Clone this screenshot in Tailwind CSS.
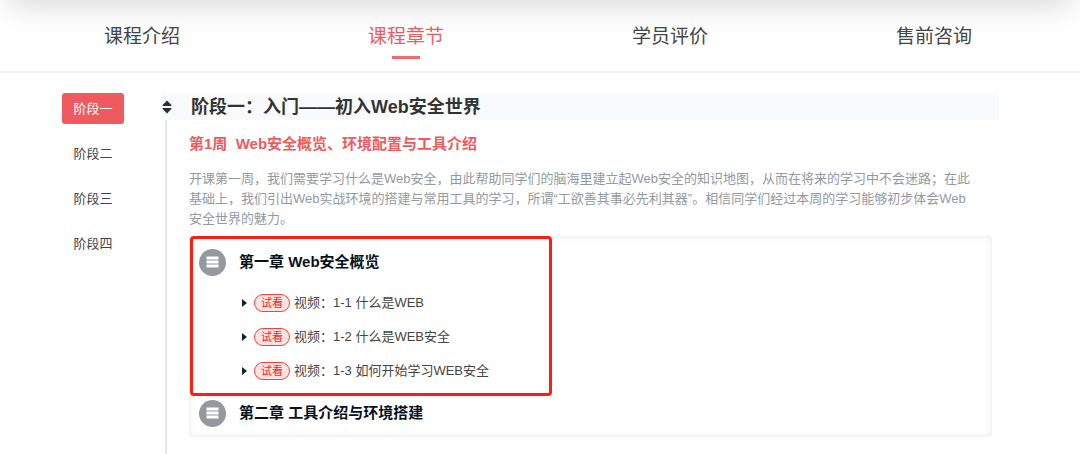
<!DOCTYPE html>
<html lang="zh-CN">
  <head>
    <title>课程章节</title>
    <meta charset="UTF-8" />
    <meta name="viewport" content="width=device-width, initial-scale=1.0" />
    <script src="https://cdn.jsdelivr.net/npm/@tailwindcss/browser@4"></script>
  </head>
  <body class="bg-white font-['Liberation_Sans','Noto_Sans_CJK_SC',sans-serif] text-[13px] text-[#444] overflow-hidden">
    <!-- bottom edge of the course card above -->
    <div class="-mt-20 h-20 mx-2 shadow-[0_6px_30px_rgba(0,0,0,0.15)]"></div>

    <nav class="grid grid-cols-4 pl-[10px] pr-[14px] h-[73px] border-b-2 border-[#f3f3f3] text-[19px]">
      <a href="#intro" class="relative flex justify-center leading-[74px]">课程介绍</a>
      <a href="#chapters" class="relative flex justify-center leading-[74px] text-[#ef5a5f]">
        课程章节
        <span class="absolute top-14 w-7 h-[3px] bg-[#f1686d]"></span>
      </a>
      <a href="#reviews" class="relative flex justify-center leading-[74px]">学员评价</a>
      <a href="#consult" class="relative flex justify-center leading-[74px]">售前咨询</a>
    </nav>

    <div class="flex items-start pl-[62px] pr-[81px] pt-5">
      <aside class="flex flex-col gap-[14px] w-[62px] shrink-0 mr-[38px]">
        <button type="button" class="h-[31px] rounded-[3px] bg-[#ef5a5f] text-white">阶段一</button>
        <button type="button" class="h-[31px] rounded-[3px]">阶段二</button>
        <button type="button" class="h-[31px] rounded-[3px]">阶段三</button>
        <button type="button" class="h-[31px] rounded-[3px]">阶段四</button>
      </aside>

      <main class="flex-1">
        <div class="flex items-center h-[27px] bg-[#f8fafc]">
          <svg class="w-[10px] h-[14px] mr-[19px]" viewBox="0 0 10 14" fill="#2b2f33">
            <path d="M5 0.5 9.4 5Q9.8 6 9 6H1Q.2 6 .6 5Z" />
            <path d="M5 13.5 9.4 9Q9.8 8 9 8H1Q.2 8 .6 9Z" />
          </svg>
          <h2 class="text-lg font-bold text-[#333]">阶段一：入门——初入Web安全世界</h2>
        </div>

        <div class="ml-[3px] pl-[22px] pr-[7px] pb-8 border-l-2 border-[#e5e5e5]">
          <h3 class="pt-3 text-[15px] leading-6 font-bold text-[#ef5a5f] whitespace-pre">第1周  Web安全概览、环境配置与工具介绍</h3>
          <p class="mt-[13px] leading-5 text-[#93999f]">
            开课第一周，我们需要学习什么是Web安全，由此帮助同学们的脑海里建立起Web安全的知识地图，从而在将来的学习中不会迷路；在此<br>基础上，我们引出Web实战环境的搭建与常用工具的学习，所谓“工欲善其事必先利其器”。相信同学们经过本周的学习能够初步体会Web<br>安全世界的魅力。
          </p>

          <div class="mt-[7px] pb-[10px] rounded-[4px] shadow-[inset_0_0_6px_rgba(7,17,27,0.1)]">
            <section class="w-[362px] ml-px pt-[10px] pl-[6px] pb-[5px] border-3 border-[#fd1d12] rounded-[4px]">
              <h4 class="flex items-center h-[27px] text-[15px] font-bold text-[#07111b]">
                <svg class="size-[27px] mr-[13px]" viewBox="0 0 27 27">
                  <circle cx="13.5" cy="13.5" r="13.5" fill="#93999f" />
                  <path d="M7.5 9h12M7.5 13h12M7.5 17h12" stroke="#fff" stroke-width="2.8" />
                </svg>
                第一章 Web安全概览
              </h4>
              <ul class="mt-[10px] pl-[43px]">
                <li>
                  <a href="#1-1" class="flex items-center h-[34px]">
                    <svg class="w-[5px] h-2 mr-[7px]" viewBox="0 0 5 8"><path d="M0 0 5 4 0 8Z" fill="#1c1f21" /></svg>
                    <span class="w-9 h-[18px] mr-1 leading-4 text-center text-[11px] text-[#ff1a1a] bg-[#ffe3e3] border border-[#ff3b3b] rounded-full">试看</span>
                    视频：1-1 什么是WEB
                  </a>
                </li>
                <li>
                  <a href="#1-2" class="flex items-center h-[34px]">
                    <svg class="w-[5px] h-2 mr-[7px]" viewBox="0 0 5 8"><path d="M0 0 5 4 0 8Z" fill="#1c1f21" /></svg>
                    <span class="w-9 h-[18px] mr-1 leading-4 text-center text-[11px] text-[#ff1a1a] bg-[#ffe3e3] border border-[#ff3b3b] rounded-full">试看</span>
                    视频：1-2 什么是WEB安全
                  </a>
                </li>
                <li>
                  <a href="#1-3" class="flex items-center h-[34px]">
                    <svg class="w-[5px] h-2 mr-[7px]" viewBox="0 0 5 8"><path d="M0 0 5 4 0 8Z" fill="#1c1f21" /></svg>
                    <span class="w-9 h-[18px] mr-1 leading-4 text-center text-[11px] text-[#ff1a1a] bg-[#ffe3e3] border border-[#ff3b3b] rounded-full">试看</span>
                    视频：1-3 如何开始学习WEB安全
                  </a>
                </li>
              </ul>
            </section>
            <section class="pl-[10px] pt-1">
              <h4 class="flex items-center h-[27px] text-[15px] font-bold text-[#07111b]">
                <svg class="size-[27px] mr-[13px]" viewBox="0 0 27 27">
                  <circle cx="13.5" cy="13.5" r="13.5" fill="#93999f" />
                  <path d="M7.5 9h12M7.5 13h12M7.5 17h12" stroke="#fff" stroke-width="2.8" />
                </svg>
                第二章 工具介绍与环境搭建
              </h4>
            </section>
          </div>
        </div>
      </main>
    </div>
  </body>
</html>
